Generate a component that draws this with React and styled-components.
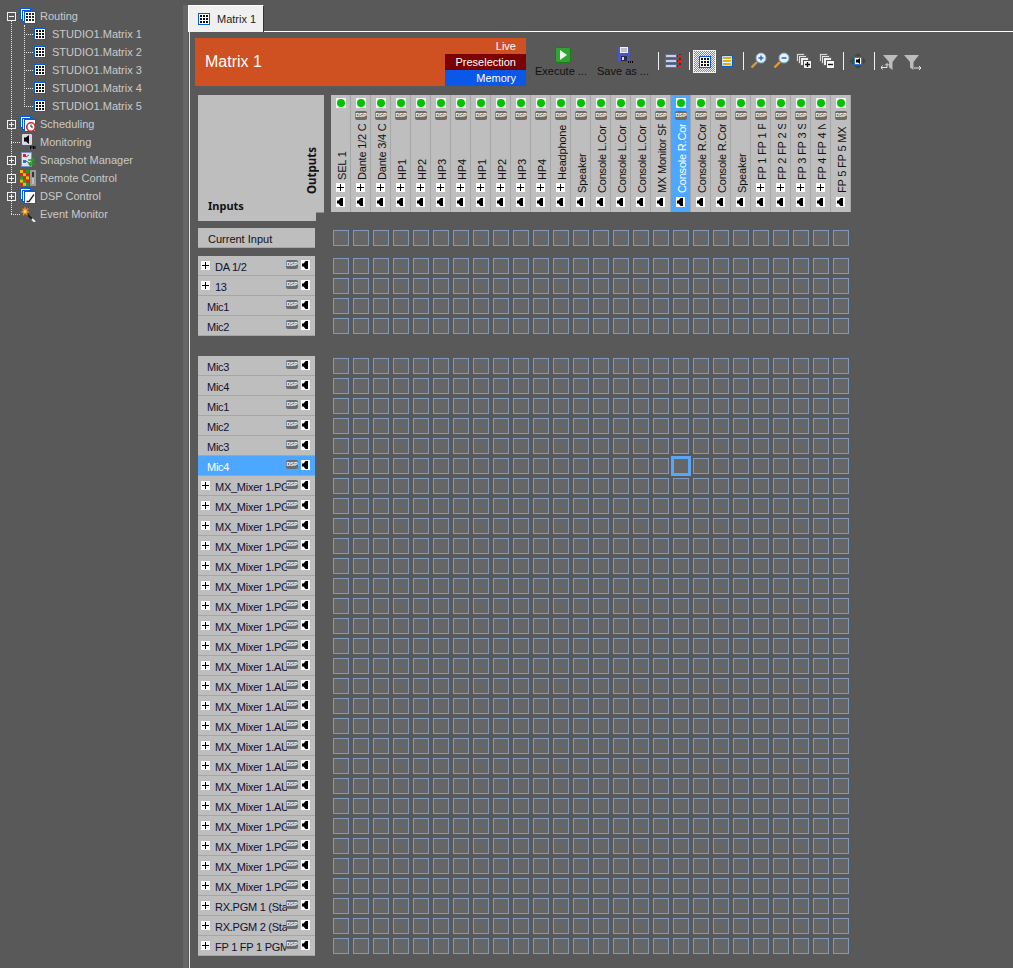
import React from 'react';
import styled, { createGlobalStyle } from 'styled-components';

const GlobalStyle = createGlobalStyle`
  html, body {
    margin: 0;
    padding: 0;
    background: #595959;
    overflow: hidden;
  }

  body {
    font-family: "Liberation Sans", Arial, sans-serif;
    font-size: 11px;
  }
`

const Page = styled.div`
  position: relative;
  width: 1013px;
  height: 968px;
  overflow: hidden;
  background: #595959;
`

// ---- tree ----
const Tree = styled.div`
  position: absolute;
  left: 0;
  top: 7px;
  width: 183px;
  height: 225px;
`

const TreeLine = styled.div`
  position: absolute;
  left: ${(p) => p.$x}px;
  top: ${(p) => p.$y}px;
  width: ${(p) => (p.$w ? `${p.$w}px` : '0')};
  height: ${(p) => (p.$h ? `${p.$h}px` : '0')};
  border-left: ${(p) => (p.$h ? '1px dotted #e4e4e4' : 'none')};
  border-top: ${(p) => (p.$w ? '1px dotted #e4e4e4' : 'none')};
`

const TreeRow = styled.div`
  position: relative;
  display: flex;
  align-items: center;
  height: 18px;
  padding-left: ${(p) => (p.$child ? 34 : 20)}px;
`

const TreeLabel = styled.span`
  position: absolute;
  left: ${(p) => (p.$child ? 52 : 40)}px;
  top: 1px;
  color: #c9c9c9;
  line-height: 16px;
  white-space: nowrap;
`

const Expander = styled.span`
  position: absolute;
  left: 7px;
  top: 5px;
  box-sizing: border-box;
  width: 9px;
  height: 9px;
  border: 1px solid #f0f0f0;
  background: #595959;

  &::before {
    content: '';
    position: absolute;
    left: 1px;
    top: 3px;
    width: 5px;
    height: 1px;
    background: #f0f0f0;
  }

  &::after {
    content: '';
    display: ${(p) => (p.$open ? 'none' : 'block')};
    position: absolute;
    left: 3px;
    top: 1px;
    width: 1px;
    height: 5px;
    background: #f0f0f0;
  }
`

const Divider = styled.div`
  position: absolute;
  left: 183px;
  top: 5px;
  width: 5px;
  height: 963px;
  background: #666;
`

// ---- tab ----
const Tab = styled.div`
  position: absolute;
  left: 188px;
  top: 5px;
  box-sizing: border-box;
  width: 76px;
  height: 27px;
  display: flex;
  align-items: center;
  gap: 7px;
  padding: 0 0 0 9px;
  background: #f0f0f0;
  border: 1px solid #fff;
  border-bottom: none;
  border-right: 1px solid #333;
  color: #222;
`

const TabLine = styled.div`
  position: absolute;
  left: 264px;
  top: 31px;
  right: 0;
  height: 1px;
  background: #fff;
`

const PaneLine = styled.div`
  position: absolute;
  left: 189px;
  top: 32px;
  width: 1px;
  bottom: 0;
  background: #e4e4e4;
`

// ---- header ----
const Banner = styled.div`
  position: absolute;
  left: 195px;
  top: 38px;
  width: 331px;
  height: 48px;
  background: #cf5020;
`

const BannerTitle = styled.div`
  position: absolute;
  left: 10px;
  top: 12px;
  font-size: 16px;
  line-height: 24px;
  color: #fff;
`

const Modes = styled.div`
  position: absolute;
  right: 0;
  top: 0;
  width: 81px;
`

const Mode = styled.div`
  height: 16px;
  padding-right: 10px;
  text-align: right;
  line-height: 16px;
  color: #fff;
  background: ${(p) => p.$bg};
`

// ---- toolbar ----
const ToolIcon = styled.div`
  position: absolute;
  left: ${(p) => p.$x}px;
  top: ${(p) => p.$y}px;
  line-height: 0;
`

const ToolCaption = styled.div`
  position: absolute;
  left: ${(p) => p.$x}px;
  top: 63px;
  line-height: 16px;
  color: #111;
  white-space: nowrap;
`

const ToolSep = styled.div`
  position: absolute;
  left: ${(p) => p.$x}px;
  top: 52px;
  width: 1px;
  height: 18px;
  background: #efefef;
`

const ToolActive = styled.div`
  position: absolute;
  left: 693px;
  top: 50px;
  box-sizing: border-box;
  width: 23px;
  height: 23px;
  border: 1px solid #f2f2f2;
  background: repeating-conic-gradient(#f2f2f2 0 25%, #8a8a8a 0 50%) 0 0 / 2px 2px;
`

// ---- matrix corner ----
const Corner = styled.div`
  position: absolute;
  left: 198px;
  top: 95px;
  width: 126px;
  height: 126px;
  background: #bebebe;
  clip-path: polygon(0 0, 100% 0, 100% 117px, 118px 117px, 118px 100%, 0 100%);
  color: #111;
  font-family: "Noto Sans", sans-serif;
  font-weight: 700;
`

const CornerShade = styled.div`
  position: absolute;
  left: 198px;
  top: 95px;
  width: 126px;
  height: 126px;
  background: #8f8f8f;
  clip-path: polygon(125px 0, 100% 0, 100% 118px, 118px 118px, 118px 100%, 0 100%, 0 125px, 117px 125px, 117px 117px, 125px 117px);
`

const InputsLabel = styled.div`
  position: absolute;
  left: 10px;
  top: 103px;
  line-height: 16px;
`

const OutputsLabel = styled.div`
  position: absolute;
  right: 5px;
  top: 52px;
  height: 47px;
  writing-mode: vertical-rl;
  transform: rotate(180deg);
  line-height: 14px;
  font-size: 11.500px;
  text-align: left;
`

// ---- output columns ----
const Column = styled.div`
  position: absolute;
  left: ${(p) => 331 + p.$index * 20}px;
  top: 95px;
  box-sizing: border-box;
  width: 20px;
  height: 117px;
  background: ${(p) => (p.$selected ? '#4da6ff' : '#bebebe')};
  border-right: 1px solid #a6a6a6;
`

const Led = styled.div`
  position: absolute;
  left: 5px;
  top: 3px;
  width: 10px;
  height: 10px;
  background: #f4f4f4;

  &::after {
    content: '';
    position: absolute;
    left: 1px;
    top: 1px;
    width: 8px;
    height: 8px;
    border-radius: 50%;
    background: #00c400;
  }
`

const DspBadge = styled.div`
  position: absolute;
  left: ${(p) => p.$x}px;
  top: ${(p) => p.$y}px;
  display: flex;
  justify-content: center;
  width: 12px;
  height: 9px;
  background: #6c6c6c;
  border-radius: 2px;
  color: #fff;
  font-size: 5.500px;
  font-weight: 700;
  line-height: 9px;
  letter-spacing: -0.1px;
  white-space: nowrap;
  overflow: hidden;
`

const ColumnLabelClip = styled.div`
  position: absolute;
  left: 0;
  top: 29px;
  width: 19px;
  height: ${(p) => (p.$plus ? 56 : 69)}px;
  overflow: hidden;
`

const ColumnLabel = styled.div`
  position: absolute;
  left: 3px;
  bottom: 0;
  width: 16px;
  height: 120px;
  writing-mode: vertical-rl;
  transform: rotate(180deg);
  line-height: 16px;
  letter-spacing: -0.2px;
  white-space: nowrap;
  color: ${(p) => (p.$selected ? '#fff' : '#111')};
`

const PlusBox = styled.div`
  position: absolute;
  left: ${(p) => p.$x}px;
  top: ${(p) => p.$y}px;
  width: 9px;
  height: 9px;
  background: #fff;

  &::before {
    content: '';
    position: absolute;
    left: 1px;
    top: 4px;
    width: 7px;
    height: 1px;
    background: #000;
  }

  &::after {
    content: '';
    position: absolute;
    left: 4px;
    top: 1px;
    width: 1px;
    height: 7px;
    background: #000;
  }
`

const SpeakerBox = styled.div`
  position: absolute;
  left: ${(p) => p.$x}px;
  top: ${(p) => p.$y}px;
  width: 9px;
  height: 10px;
  background: #fff;

  &::after {
    content: '';
    position: absolute;
    left: 1px;
    top: 1px;
    width: 6px;
    height: 8px;
    background: #000;
    clip-path: polygon(60% 0, 100% 0, 100% 100%, 60% 100%, 25% 70%, 0 70%, 0 30%, 25% 30%);
  }
`

// ---- inputs ----
const InputRow = styled.div`
  position: absolute;
  left: 198px;
  top: ${(p) => p.$y}px;
  box-sizing: border-box;
  width: 117px;
  height: 20px;
  background: ${(p) => (p.$selected ? '#4da6ff' : '#bebebe')};
  border-bottom: 1px solid #a6a6a6;
  color: ${(p) => (p.$selected ? '#fff' : '#111133')};
`

const CurrentInput = styled.div`
  position: absolute;
  left: 198px;
  top: 228px;
  box-sizing: border-box;
  width: 117px;
  height: 20px;
  padding-left: 10px;
  background: #bebebe;
  border-bottom: 1px solid #a6a6a6;
  line-height: 22px;
  color: #111;
`

const InputLabel = styled.div`
  position: absolute;
  left: ${(p) => (p.$plus ? 17 : 9)}px;
  top: 3px;
  width: ${(p) => (p.$plus ? 72 : 79)}px;
  line-height: 17px;
  letter-spacing: -0.25px;
  white-space: nowrap;
  overflow: hidden;
`

// ---- crosspoints ----
const Cross = styled.div`
  position: absolute;
  left: ${(p) => 333 + p.$col * 20}px;
  top: ${(p) => p.$y}px;
  box-sizing: border-box;
  width: 16px;
  height: 16px;
  background: #666;
  border: 1px solid #7d9abd;
`

const Cursor = styled.div`
  position: absolute;
  left: 671px;
  top: 456px;
  box-sizing: border-box;
  width: 20px;
  height: 20px;
  background: #666;
  border: 3px solid #58a6f5;
`

// ---- icons ----
const MatrixIcon = () => (
  <svg width="12" height="12" viewBox="0 0 12 12">
    <rect x="0.500" y="0.500" width="11" height="11" fill="#fff" stroke="#0a5ad2" />
    <path d="M2 2h2v2H2zM5 2h2v2H5zM8 2h2v2H8zM2 5h2v2H2zM5 5h2v2H5zM8 5h2v2H8zM2 8h2v2H2zM5 8h2v2H5zM8 8h2v2H8z" fill="#111" />
  </svg>
)

const StackBack = () => (
  <>
    <rect x="0.500" y="0.500" width="10" height="11" fill="#fff" stroke="#0a5ad2" />
    <rect x="2.500" y="2.500" width="10" height="11" fill="#fff" stroke="#0a5ad2" />
    <rect x="4.500" y="3.500" width="11" height="12" fill="#fff" stroke="#0a5ad2" />
  </>
)

const RoutingIcon = () => (
  <svg width="16" height="16" viewBox="0 0 16 16">
    <StackBack />
    <path d="M6 5h2v2H6zM9 5h2v2H9zM12 5h2v2h-2zM6 8h2v2H6zM9 8h2v2H9zM12 8h2v2h-2zM6 11h2v2H6zM9 11h2v2H9zM12 11h2v2h-2z" fill="#222" />
  </svg>
)

const SchedulingIcon = () => (
  <svg width="16" height="16" viewBox="0 0 16 16">
    <StackBack />
    <circle cx="11" cy="11" r="4.200" fill="#fff" stroke="#d8261c" strokeWidth="1.600" />
    <path d="M11 8.500V11h2" fill="none" stroke="#222" />
  </svg>
)

const MonitoringIcon = () => (
  <svg width="16" height="16" viewBox="0 0 16 16">
    <rect x="2" y="0" width="10" height="11" rx="1" fill="#d8d8e4" />
    <path d="M9 1v9L6 7.500H4v-4h2z" fill="#000" />
    <path d="M10.500 15v-3l1.500 1.500L13.500 12l0 3M15 12v3" fill="none" stroke="#000" />
  </svg>
)

const SnapshotIcon = () => (
  <svg width="16" height="16" viewBox="0 0 16 16">
    <rect x="1.500" y="0.500" width="10" height="14" fill="#dfe4f4" stroke="#7d8fc4" />
    <rect x="3" y="2" width="3" height="3" fill="#d8261c" />
    <rect x="3" y="8" width="3" height="3" fill="#3a6ad8" />
    <path d="M6 5l3-2M6 9l3 2" stroke="#555" />
    <path d="M8 8h6M12 6l2 2-2 2M15 12H9M11 10l-2 2 2 2" fill="none" stroke="#1fa01f" strokeWidth="1.500" />
  </svg>
)

const remoteColours = ['#e0c010', '#d8261c', '#20a020', '#d8261c', '#e0c010', '#d8261c', '#20a020', '#d8261c', '#e0c010', '#e0c010', '#20a020', '#d8261c', '#d8261c', '#e0c010', '#20a020'];

const RemoteIcon = () => (
  <svg width="16" height="16" viewBox="0 0 16 16">
    {remoteColours.map((c, i) => (
      <rect key={i} x={(i % 3) * 3} y={Math.floor(i / 3) * 3.200} width="3" height="3.200" fill={c} />
    ))}
    <rect x="10" y="0" width="6" height="16" fill="#999" />
    <rect x="12" y="2" width="2" height="5" fill="#333" />
    <path d="M12 9h2M12 11h2M12 13h2" stroke="#e4e4e4" />
  </svg>
)

const DspIcon = () => (
  <svg width="16" height="16" viewBox="0 0 16 16">
    <StackBack />
    <path d="M6.500 13.500H9L14 6.500" fill="none" stroke="#222" strokeWidth="1.300" />
  </svg>
)

const EventIcon = () => (
  <svg width="16" height="16" viewBox="0 0 16 16">
    <path d="M7 8l5 5" stroke="#222" strokeWidth="2" />
    <path d="M12 13l3 3" stroke="#f0f0f0" strokeWidth="2" />
    <path d="M5 0l1 3 3-1-2 3 3 1-3 1 1 3-3-2-2 2V7L0 6l3-1-1-3 2 1z" fill="#f08a20" />
    <circle cx="5" cy="5.500" r="1.500" fill="#f8e060" />
  </svg>
)

const ExecuteIcon = () => (
  <svg width="16" height="16" viewBox="0 0 16 16">
    <rect x="0.500" y="0.500" width="15" height="15" rx="2" fill="#2ea52e" stroke="#1c7a1c" />
    <path d="M5 3l7 5-7 5z" fill="#f2f2f2" />
  </svg>
)

const SaveIcon = () => (
  <svg width="16" height="16" viewBox="0 0 16 16">
    <path d="M0 0h10l2 2v12H0z" fill="#4a55c8" />
    <rect x="2" y="0" width="8" height="6" fill="#f2f2f2" />
    <path d="M3 2h6M3 4h6" stroke="#8a8ab0" />
    <rect x="3" y="9" width="6" height="5" fill="#2a2a3a" />
    <rect x="4" y="10" width="2" height="3" fill="#d0d0d0" />
    <path d="M10 15h1M12 15h1M14 15h1" stroke="#000" strokeWidth="2" />
  </svg>
)

const ListIcon = () => (
  <svg width="18" height="16" viewBox="0 0 18 16">
    <rect x="0.500" y="1.500" width="11" height="3" fill="#c8d0ee" stroke="#5c6c92" />
    <rect x="0.500" y="6.500" width="11" height="3" fill="#c8d0ee" stroke="#5c6c92" />
    <rect x="0.500" y="11.500" width="11" height="3" fill="#c8d0ee" stroke="#5c6c92" />
    <path d="M12 3h3v-2M12 8h3V4M12 13h3V9" fill="none" stroke="#111" />
    <path d="M13 2h3v3h-3zM13 7h3v3h-3zM13 12h3v3h-3z" fill="#d8261c" />
  </svg>
)

const RowsIcon = () => (
  <svg width="12" height="12" viewBox="0 0 12 12">
    <rect x="0.500" y="0.500" width="11" height="11" fill="#fff" stroke="#0a5ad2" strokeWidth="1.400" />
    <path d="M2 2h8v2H2zM2 5h8v2H2zM2 8h8v2H2z" fill="#d8b010" />
  </svg>
)

const ZoomIcon = ({ minus }) => (
  <svg width="17" height="17" viewBox="0 0 17 17">
    <path d="M1.500 15.500L7 10" stroke="#e09a30" strokeWidth="2.400" />
    <circle cx="11" cy="6" r="5" fill="#e8f2fb" stroke="#7aa8d0" />
    <path d={minus ? 'M8.500 6h5' : 'M8.500 6h5M11 3.500v5'} stroke="#2a6ac8" strokeWidth="1.500" />
  </svg>
)

const PagesIcon = ({ minus }) => (
  <svg width="16" height="16" viewBox="0 0 16 16">
    <rect x="0.500" y="0.500" width="8" height="8" fill="#d8d8d8" stroke="#666" />
    <rect x="2.500" y="2.500" width="8" height="8" fill="#e4e4e4" stroke="#666" />
    <rect x="4.500" y="4.500" width="8" height="8" fill="#eee" stroke="#666" />
    <rect x="7.500" y="7.500" width="8" height="8" fill="#f6f6f6" stroke="#555" />
    <path d={minus ? 'M9 11.500h5' : 'M9 11.500h5M11.500 9v5'} stroke="#111" strokeWidth="1.400" />
  </svg>
)

const MoveIcon = () => (
  <svg width="16" height="16" viewBox="0 0 16 16">
    <path d="M8 0l4 3.500H4zM8 16l-4-3.500h8zM0 8l3.500-4v8zM16 8l-3.500 4V4z" fill="#444" />
    <rect x="4.500" y="4.500" width="7" height="7" fill="#fff" stroke="#2a7ad8" />
    <path d="M10 5v6L8 9.500H6v-3h2z" fill="#000" />
  </svg>
)

const FilterIcon = ({ right }) => (
  <svg width="18" height="17" viewBox="0 0 18 17">
    <path d={right ? 'M0 1h15L9.500 8v8L6 13.500V8z' : 'M2 1h15l-5.500 7v8L8 13.500V8z'} fill="#bcbcbc" />
    {right ? (
      <path d="M10 14h7M15 12l2 2-2 2" fill="none" stroke="#e8e8e8" />
    ) : (
      <path d="M0 13.500h6V10M4 11.500l2-2 2 2M1.500 11.500l-1.500 2 1.500 2" fill="none" stroke="#e8e8e8" />
    )}
  </svg>
)

// ---- data ----
const outputs = [
  ['SEL 1', 1, 0], ['Dante 1/2 Console', 1, 1], ['Dante 3/4 Console', 1, 1], ['HP1', 1, 1], ['HP2', 1, 1], ['HP3', 1, 1],
  ['HP4', 1, 1], ['HP1', 1, 1], ['HP2', 1, 1], ['HP3', 1, 1], ['HP4', 1, 1], ['Headphone', 1, 1], ['Speaker', 0, 1],
  ['Console L.Cor', 0, 1], ['Console L.Cor', 0, 1], ['Console L.Cor', 0, 1], ['MX Monitor SF', 0, 1], ['Console R.Cor', 0, 1],
  ['Console R.Cor', 0, 1], ['Console R.Cor', 0, 1], ['Speaker', 0, 1], ['FP 1 FP 1 PGM', 1, 1], ['FP 2 FP 2 SPK', 1, 1],
  ['FP 3 FP 3 SPK', 1, 1], ['FP 4 FP 4 NET', 1, 1], ['FP 5 FP 5 MX 1', 0, 1],
];

const inputNames = [
  ['DA 1/2', 1], ['13', 1], ['Mic1', 0], ['Mic2', 0], null,
  ['Mic3', 0], ['Mic4', 0], ['Mic1', 0], ['Mic2', 0], ['Mic3', 0], ['Mic4', 0],
  ...Array(9).fill(['MX_Mixer 1.PGM', 1]),
  ...Array(8).fill(['MX_Mixer 1.AUX', 1]),
  ...Array(4).fill(['MX_Mixer 1.PGM', 1]),
  ['RX.PGM 1 (Stage)', 1], ['RX.PGM 2 (Stage)', 1], ['FP 1 FP 1 PGM 1', 1],
];

const SELECTED_COLUMN = 17;
const SELECTED_ROW = 10;

const App = () => (
  <Page>
    <GlobalStyle />

    <Tree>
      <TreeLine $x={11} $y={13} $h={194} />
      <TreeLine $x={24} $y={18} $h={82} />
      {[27, 45, 63, 81, 99].map((y) => <TreeLine key={y} $x={24} $y={y} $w={9} />)}
      {[135, 207].map((y) => <TreeLine key={y} $x={11} $y={y} $w={9} />)}

      <TreeRow><Expander $open /><RoutingIcon /><TreeLabel>Routing</TreeLabel></TreeRow>
      {[1, 2, 3, 4, 5].map((n) => (
        <TreeRow $child key={n}><MatrixIcon /><TreeLabel $child>STUDIO1.Matrix {n}</TreeLabel></TreeRow>
      ))}
      <TreeRow><Expander /><SchedulingIcon /><TreeLabel>Scheduling</TreeLabel></TreeRow>
      <TreeRow><MonitoringIcon /><TreeLabel>Monitoring</TreeLabel></TreeRow>
      <TreeRow><Expander /><SnapshotIcon /><TreeLabel>Snapshot Manager</TreeLabel></TreeRow>
      <TreeRow><Expander /><RemoteIcon /><TreeLabel>Remote Control</TreeLabel></TreeRow>
      <TreeRow><Expander /><DspIcon /><TreeLabel>DSP Control</TreeLabel></TreeRow>
      <TreeRow><EventIcon /><TreeLabel>Event Monitor</TreeLabel></TreeRow>
    </Tree>

    <Divider />
    <Tab><MatrixIcon />Matrix 1</Tab>
    <TabLine />
    <PaneLine />

    <Banner>
      <BannerTitle>Matrix 1</BannerTitle>
      <Modes>
        <Mode $bg="transparent">Live</Mode>
        <Mode $bg="#7b0000">Preselection</Mode>
        <Mode $bg="#0a58e8">Memory</Mode>
      </Modes>
    </Banner>

    <ToolIcon $x={555} $y={47}><ExecuteIcon /></ToolIcon>
    <ToolCaption $x={535}>Execute ...</ToolCaption>
    <ToolIcon $x={618} $y={47}><SaveIcon /></ToolIcon>
    <ToolCaption $x={597}>Save as ...</ToolCaption>
    <ToolSep $x={658} />
    <ToolIcon $x={665} $y={53}><ListIcon /></ToolIcon>
    <ToolSep $x={689} />
    <ToolActive />
    <ToolIcon $x={699} $y={56}><MatrixIcon /></ToolIcon>
    <ToolIcon $x={721} $y={55}><RowsIcon /></ToolIcon>
    <ToolSep $x={743} />
    <ToolIcon $x={750} $y={52}><ZoomIcon /></ToolIcon>
    <ToolIcon $x={773} $y={52}><ZoomIcon minus /></ToolIcon>
    <ToolIcon $x={796} $y={53}><PagesIcon /></ToolIcon>
    <ToolIcon $x={819} $y={53}><PagesIcon minus /></ToolIcon>
    <ToolSep $x={843} />
    <ToolIcon $x={850} $y={53}><MoveIcon /></ToolIcon>
    <ToolSep $x={874} />
    <ToolIcon $x={881} $y={54}><FilterIcon /></ToolIcon>
    <ToolIcon $x={904} $y={54}><FilterIcon right /></ToolIcon>

    <CornerShade />
    <Corner>
      <InputsLabel>Inputs</InputsLabel>
      <OutputsLabel>Outputs</OutputsLabel>
    </Corner>

    {outputs.map(([name, plus, dsp], i) => (
      <Column key={i} $index={i} $selected={i === SELECTED_COLUMN}>
        <Led />
        {dsp ? <DspBadge $x={4} $y={16}>DSP</DspBadge> : null}
        <ColumnLabelClip $plus={plus}>
          <ColumnLabel $selected={i === SELECTED_COLUMN}>{name}</ColumnLabel>
        </ColumnLabelClip>
        {plus ? <PlusBox $x={5} $y={88} /> : null}
        <SpeakerBox $x={5} $y={102} />
      </Column>
    ))}

    <CurrentInput>Current Input</CurrentInput>
    {outputs.map((_, col) => <Cross key={col} $col={col} $y={230} />)}

    {inputNames.map((row, i) => row && (
      <React.Fragment key={i}>
        <InputRow $y={256 + i * 20} $selected={i === SELECTED_ROW}>
          {row[1] ? <PlusBox $x={3} $y={5} /> : null}
          <InputLabel $plus={row[1]}>{row[0]}</InputLabel>
          <DspBadge $x={88} $y={4}>DSP</DspBadge>
          <SpeakerBox $x={103} $y={4} />
        </InputRow>
        {outputs.map((_, col) => <Cross key={col} $col={col} $y={258 + i * 20} />)}
      </React.Fragment>
    ))}
    <Cursor />
  </Page>
);

export default App;
